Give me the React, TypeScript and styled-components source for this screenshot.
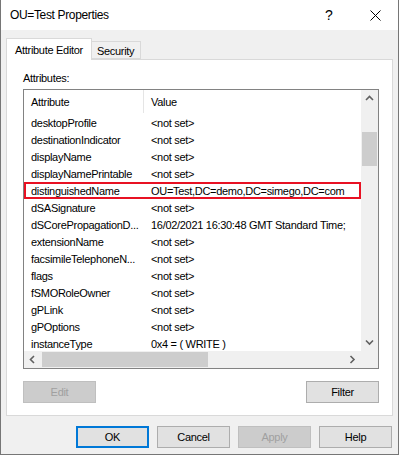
import React from 'react';
import styled, { createGlobalStyle } from 'styled-components';

const Global = createGlobalStyle`
  html, body {
    margin: 0;
    padding: 0;
    background: #f0f0f0;
  }
  * {
    box-sizing: border-box;
  }
`

const Window = styled.div`
  width: 399px;
  height: 455px;
  background: #f0f0f0;
  border: 1px solid #767676;
  border-top: none;
  display: flex;
  flex-direction: column;
  font-family: "Liberation Sans", Arial, sans-serif;
  font-size: 11px;
  letter-spacing: -0.3px;
  color: #000;
  overflow: hidden;
`

const TitleBar = styled.div`
  height: 30px;
  flex: none;
  background: #fff;
  display: flex;
  align-items: center;
  padding-left: 9px;
`

const Title = styled.div`
  font-size: 12px;
  letter-spacing: -0.35px;
  flex: 1;
`

const TitleButton = styled.div`
  width: 46px;
  height: 30px;
  display: flex;
  align-items: center;
  justify-content: center;
  font-size: 14px;
  letter-spacing: 0;
`

const Body = styled.div`
  flex: 1;
  display: flex;
  flex-direction: column;
  padding: 8px 6px 0 5px;
`

const TabStrip = styled.div`
  height: 21px;
  display: flex;
  align-items: flex-end;
`

const Tab = styled.div<{ $active?: boolean }>`
  position: relative;
  z-index: 1;
  align-self: ${p => (p.$active ? 'flex-start' : 'flex-end')};
  height: ${p => (p.$active ? '22px' : '18px')};
  margin-bottom: ${p => (p.$active ? '-1px' : '0')};
  padding: ${p => (p.$active ? '0 8px 0 8px' : '2px 6px 0 5px')};
  display: flex;
  align-items: center;
  background: ${p => (p.$active ? '#fff' : '#f0f0f0')};
  border: 1px solid #d9d9d9;
  border-bottom: ${p => (p.$active ? 'none' : '1px solid #d9d9d9')};
  border-left: ${p => (p.$active ? '1px solid #d9d9d9' : 'none')};
`

const Panel = styled.div`
  width: 387px;
  height: 357px;
  background: #fff;
  border: 1px solid #d9d9d9;
  padding: 0 13px 0 16px;
  display: flex;
  flex-direction: column;
`

const Label = styled.div`
  margin-top: 12px;
  height: 13px;
  line-height: 13px;
`

const ListBox = styled.div`
  margin-top: 4px;
  width: 356px;
  height: 280px;
  border: 1px solid #828282;
  display: grid;
  grid-template-columns: 337px 17px;
  grid-template-rows: 261px 17px;
  background: #fff;
`

const ListContent = styled.div`
  overflow: hidden;
`

const HeaderRow = styled.div`
  height: 24px;
  display: grid;
  grid-template-columns: 120px 1fr;
  align-items: stretch;
`

const HeaderCell = styled.div<{ $divider?: boolean }>`
  display: flex;
  align-items: center;
  padding-left: 7px;
  border-right: ${p => (p.$divider ? '1px solid #e5e5e5' : 'none')};
  margin: 0 0 1px 0;
`

const Row = styled.div<{ $marked?: boolean }>`
  height: 17px;
  display: grid;
  grid-template-columns: 120px 1fr;
  align-items: center;
  box-shadow: ${p => (p.$marked ? 'inset 0 0 0 2px #e81123' : 'none')};
`

const Cell = styled.div`
  padding-left: 7px;
  white-space: nowrap;
  overflow: hidden;
`

const VScroll = styled.div`
  background: #f0f0f0;
  display: flex;
  flex-direction: column;
`

const HScroll = styled.div`
  background: #f0f0f0;
  display: flex;
  align-items: center;
`

const ArrowButton = styled.div`
  width: 17px;
  height: 17px;
  flex: none;
  display: flex;
  align-items: center;
  justify-content: center;
`

const VTrack = styled.div`
  flex: 1;
  padding: 25px 1px 0 1px;
`

const VThumb = styled.div`
  height: 34px;
  background: #cdcdcd;
`

const HTrack = styled.div`
  flex: 1;
  height: 17px;
  padding: 1px 0 1px 1px;
`

const HThumb = styled.div`
  width: 166px;
  height: 15px;
  background: #cdcdcd;
`

const Corner = styled.div`
  background: #f0f0f0;
`

const PanelButtons = styled.div`
  width: 356px;
  margin-top: 12px;
  display: flex;
  justify-content: space-between;
`

const Button = styled.div<{ $disabled?: boolean; $default?: boolean }>`
  width: 73px;
  height: 22px;
  display: flex;
  align-items: center;
  justify-content: center;
  background: ${p => (p.$disabled ? '#cccccc' : '#e1e1e1')};
  color: ${p => (p.$disabled ? '#a0a0a0' : '#000')};
  border: ${p => (p.$default ? '2px solid #0078d7' : p.$disabled ? '1px solid #bfbfbf' : '1px solid #adadad')};
`

const Footer = styled.div`
  margin-top: 10px;
  display: flex;
  justify-content: flex-end;
  gap: 8px;
`

const Chevron = ({ dir }: { dir: 'up' | 'down' | 'left' | 'right' }) => {
  const pts = {
    up: '1,5 4.5,1.5 8,5',
    down: '1,1.5 4.5,5 8,1.5',
    left: '5,1 1.5,4.5 5,8',
    right: '1.5,1 5,4.5 1.5,8',
  }[dir];
  const vertical = dir === 'up' || dir === 'down';
  return (
    <svg width={vertical ? 9 : 7} height={vertical ? 7 : 9} viewBox={vertical ? '0 0 9 7' : '0 0 7 9'}>
      <polyline points={pts} fill="none" stroke="#606060" strokeWidth="1.6" />
    </svg>
  );
};

const rows: [string, string, boolean?][] = [
  ['desktopProfile', '<not set>'],
  ['destinationIndicator', '<not set>'],
  ['displayName', '<not set>'],
  ['displayNamePrintable', '<not set>'],
  ['distinguishedName', 'OU=Test,DC=demo,DC=simego,DC=com', true],
  ['dSASignature', '<not set>'],
  ['dSCorePropagationD...', '16/02/2021 16:30:48 GMT Standard Time;'],
  ['extensionName', '<not set>'],
  ['facsimileTelephoneN...', '<not set>'],
  ['flags', '<not set>'],
  ['fSMORoleOwner', '<not set>'],
  ['gPLink', '<not set>'],
  ['gPOptions', '<not set>'],
  ['instanceType', '0x4 = ( WRITE )'],
];

const App: React.FC = () => {
  return (
    <Window>
      <Global />
      <TitleBar>
        <Title>OU=Test Properties</Title>
        <TitleButton>?</TitleButton>
        <TitleButton>
          <svg width="11" height="11" viewBox="0 0 11 11">
            <path d="M0.5 0.5 L10.5 10.5 M10.5 0.5 L0.5 10.5" stroke="#000" strokeWidth="1" />
          </svg>
        </TitleButton>
      </TitleBar>
      <Body>
        <TabStrip>
          <Tab $active>Attribute Editor</Tab>
          <Tab>Security</Tab>
        </TabStrip>
        <Panel>
          <Label>Attributes:</Label>
          <ListBox>
            <ListContent>
              <HeaderRow>
                <HeaderCell $divider>Attribute</HeaderCell>
                <HeaderCell>Value</HeaderCell>
              </HeaderRow>
              {rows.map(([name, value, marked]) => (
                <Row key={name} $marked={marked}>
                  <Cell>{name}</Cell>
                  <Cell>{value}</Cell>
                </Row>
              ))}
            </ListContent>
            <VScroll>
              <ArrowButton><Chevron dir="up" /></ArrowButton>
              <VTrack><VThumb /></VTrack>
              <ArrowButton><Chevron dir="down" /></ArrowButton>
            </VScroll>
            <HScroll>
              <ArrowButton><Chevron dir="left" /></ArrowButton>
              <HTrack><HThumb /></HTrack>
              <ArrowButton><Chevron dir="right" /></ArrowButton>
            </HScroll>
            <Corner />
          </ListBox>
          <PanelButtons>
            <Button $disabled>Edit</Button>
            <Button>Filter</Button>
          </PanelButtons>
        </Panel>
        <Footer>
          <Button $default>OK</Button>
          <Button>Cancel</Button>
          <Button $disabled>Apply</Button>
          <Button>Help</Button>
        </Footer>
      </Body>
    </Window>
  );
};

export default App;
